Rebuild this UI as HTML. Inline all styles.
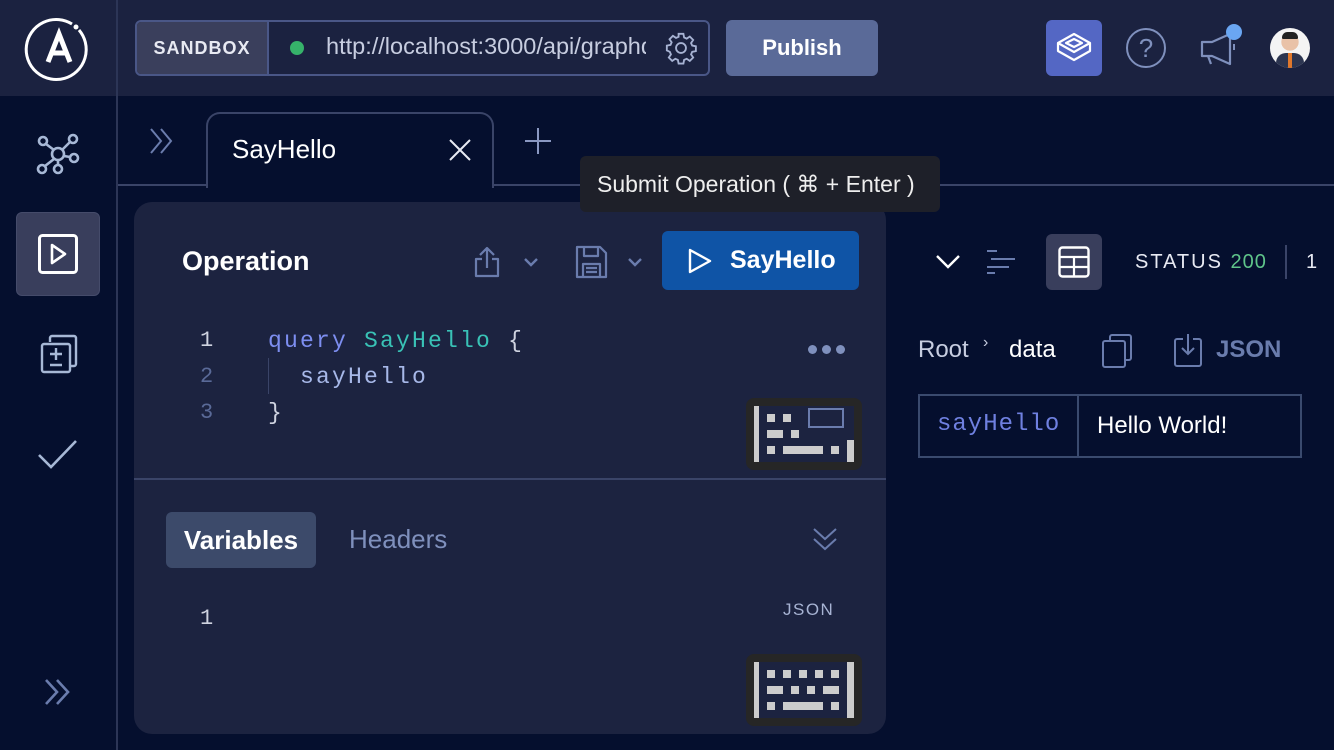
<!DOCTYPE html>
<html><head><meta charset="utf-8">
<style>
*{margin:0;padding:0;box-sizing:border-box}
body{width:1334px;height:750px;overflow:hidden;background:#050f2e;font-family:"Liberation Sans",sans-serif;color:#fff;position:relative}
.a{position:absolute}
.mono{font-family:"Liberation Mono","DejaVu Sans Mono",monospace}
svg{position:absolute;overflow:visible}
</style></head><body>
<div class="a" style="left:0;top:0;width:1334px;height:96px;background:#1b2240"></div>
<div class="a" style="left:116px;top:0;width:2px;height:750px;background:#2c3556"></div>
<svg style="left:26px;top:16px" width="66" height="66" viewBox="0 0 66 66"><path d="M53 14 A30 30 0 1 1 46 8" fill="none" stroke="#fff" stroke-width="3"/><circle cx="50" cy="11" r="2.5" fill="#fff"/><path d="M22 46 L33 18 L44 46 M26 37 H40" fill="none" stroke="#fff" stroke-width="5"/></svg>
<div class="a" style="left:135px;top:20px;width:575px;height:56px;border:2px solid #4a5787;border-radius:6px;background:#1b2240"></div>
<div class="a" style="left:137px;top:22px;width:132px;height:52px;background:#3a3f5c;border-right:2px solid #4a5787;border-radius:4px 0 0 4px;font-size:18px;font-weight:bold;letter-spacing:1px;line-height:52px;text-align:center;color:#e8eaf3">SANDBOX</div>
<div class="a" style="left:290px;top:41px;width:14px;height:14px;border-radius:50%;background:#36b26a"></div>
<div class="a" style="left:326px;top:33px;width:320px;overflow:hidden;white-space:nowrap;font-size:23.5px;color:#c7cde0">http://localhost:3000/api/graphql</div>
<svg style="left:664px;top:31px" width="34" height="34" viewBox="0 0 24 24"><path d="M12 8.5a3.5 3.5 0 1 0 0 7 3.5 3.5 0 0 0 0-7z M10.3 2h3.4l.5 2.6 1.8.8 2.2-1.5 2.4 2.4-1.5 2.2.8 1.8 2.6.5v3.4l-2.6.5-.8 1.8 1.5 2.2-2.4 2.4-2.2-1.5-1.8.8-.5 2.6h-3.4l-.5-2.6-1.8-.8-2.2 1.5-2.4-2.4 1.5-2.2-.8-1.8L2 13.7v-3.4l2.6-.5.8-1.8-1.5-2.2 2.4-2.4 2.2 1.5 1.8-.8z" fill="none" stroke="#a7b3d3" stroke-width="1.3"/></svg>
<div class="a" style="left:726px;top:20px;width:152px;height:56px;background:#5a6a98;border-radius:6px;font-size:22px;font-weight:bold;line-height:56px;text-align:center">Publish</div>
<div class="a" style="left:1046px;top:20px;width:56px;height:56px;background:#5467c4;border-radius:6px"></div>
<svg style="left:1054px;top:30px" width="40" height="36" viewBox="0 0 40 36"><path d="M20 4 L36 13 L20 22 L4 13 Z M4 13 V21 L20 30 L36 21 V13 M12 13 L20 9 L28 13 L20 17 Z" fill="none" stroke="#fff" stroke-width="2.2" stroke-linejoin="round"/></svg>
<div class="a" style="left:1126px;top:28px;width:40px;height:40px;border:2px solid #7f90bd;border-radius:50%;color:#7f90bd;font-size:26px;text-align:center;line-height:36px">?</div>
<svg style="left:1196px;top:24px" width="50" height="44" viewBox="0 0 50 44"><path d="M6 18 H16 L34 10 V40 L16 32 H6 Z M12 32 L15 40" fill="none" stroke="#7f90bd" stroke-width="2.2" stroke-linejoin="round"/><path d="M38 20 V26" stroke="#7f90bd" stroke-width="2"/><circle cx="38" cy="8" r="8" fill="#6aa6f2"/></svg>
<div class="a" style="left:1270px;top:28px;width:40px;height:40px;border-radius:50%;background:radial-gradient(circle at 50% 35%,#e9c2a8 0 26%,#f4f4f4 27%);overflow:hidden"><div class="a" style="left:6px;top:25px;width:28px;height:20px;background:#2c3550;border-radius:10px 10px 0 0"></div><div class="a" style="left:18px;top:25px;width:4px;height:16px;background:#e0782c"></div><div class="a" style="left:12px;top:4px;width:16px;height:7px;background:#222;border-radius:8px 8px 2px 2px"></div></div>
<svg style="left:36px;top:132px" width="44" height="44" viewBox="0 0 44 44"><g fill="none" stroke="#a7b8d6" stroke-width="2.6"><circle cx="22" cy="22" r="6"/><circle cx="7" cy="9" r="4"/><circle cx="37" cy="7" r="4"/><circle cx="38" cy="26" r="4"/><circle cx="6" cy="37" r="4"/><circle cx="22" cy="37" r="4"/><path d="M10 12 L18 18 M34 10 L26 18 M28 24 L34 25 M18 27 L9 34 M22 28 V33"/></g></svg>
<div class="a" style="left:16px;top:212px;width:84px;height:84px;background:#393e5c;border-radius:6px;border:1px solid #454b6a"></div>
<svg style="left:38px;top:234px" width="40" height="40" viewBox="0 0 40 40"><rect x="1.5" y="1.5" width="37" height="37" rx="3" fill="none" stroke="#fff" stroke-width="3"/><path d="M14 11 L27 20 L14 29 Z" fill="none" stroke="#fff" stroke-width="2.6" stroke-linejoin="round"/></svg>
<svg style="left:40px;top:334px" width="38" height="40" viewBox="0 0 38 40"><g fill="none" stroke="#a7b8d6" stroke-width="2.4"><path d="M10 8 V4 A2 2 0 0 1 12 2 H34 A2 2 0 0 1 36 4 V30 A2 2 0 0 1 34 32 H30"/><rect x="2" y="10" width="28" height="28" rx="2"/><path d="M10 20 H22 M16 14 V26 M10 31 H22"/></g></svg>
<svg style="left:38px;top:440px" width="40" height="30" viewBox="0 0 40 30"><path d="M1 15 L13 27 L38 1" fill="none" stroke="#a7b8d6" stroke-width="2.6"/></svg>
<svg style="left:45px;top:678px" width="26" height="28" viewBox="0 0 26 28"><path d="M1 2 L12 14 L1 26 M12 2 L23 14 L12 26" fill="none" stroke="#6a7cad" stroke-width="2.6"/></svg>
<div class="a" style="left:118px;top:184px;width:1216px;height:2px;background:#3a4468"></div>
<svg style="left:150px;top:128px" width="24" height="26" viewBox="0 0 24 26"><path d="M1 1 L11 13 L1 25 M11 1 L21 13 L11 25" fill="none" stroke="#6a7cad" stroke-width="2"/></svg>
<div class="a" style="left:206px;top:112px;width:288px;height:76px;background:#050f2e;border:2px solid #3a4468;border-bottom:none;border-radius:14px 14px 0 0"></div>
<div class="a" style="left:232px;top:134px;font-size:26px;color:#fff">SayHello</div>
<svg style="left:449px;top:139px" width="22" height="22" viewBox="0 0 22 22"><path d="M1 1 L21 21 M21 1 L1 21" stroke="#e8eaf3" stroke-width="2"/></svg>
<svg style="left:525px;top:128px" width="26" height="26" viewBox="0 0 26 26"><path d="M13 0 V26 M0 13 H26" stroke="#8a98c2" stroke-width="2"/></svg>
<div class="a" style="left:134px;top:202px;width:752px;height:532px;background:#1c2340;border-radius:18px"></div>
<div class="a" style="left:134px;top:478px;width:752px;height:2px;background:#3a4468"></div>
<div class="a" style="left:182px;top:246px;font-size:27px;font-weight:bold">Operation</div>
<svg style="left:474px;top:246px" width="26" height="32" viewBox="0 0 26 32"><path d="M13 2 V22 M6 9 L13 2 L20 9 M8 13 H2 V30 H24 V13 H18" fill="none" stroke="#6a7cad" stroke-width="2.2" stroke-linejoin="round"/></svg>
<svg style="left:523px;top:257px" width="16" height="10" viewBox="0 0 16 10"><path d="M2 2 L8 8 L14 2" fill="none" stroke="#6a7cad" stroke-width="2.4"/></svg>
<svg style="left:574px;top:246px" width="34" height="32" viewBox="0 0 34 32"><path d="M3 1 H26 L32 7 V31 H3 Z M10 1 V10 H24 V1 M9 31 V18 H26 V31 M12 22 H23 M12 26 H23" fill="none" stroke="#6a7cad" stroke-width="2.2" stroke-linejoin="round"/></svg>
<svg style="left:627px;top:257px" width="16" height="10" viewBox="0 0 16 10"><path d="M2 2 L8 8 L14 2" fill="none" stroke="#6a7cad" stroke-width="2.4"/></svg>
<div class="a" style="left:662px;top:231px;width:197px;height:59px;background:#0f54a6;border-radius:6px"></div>
<svg style="left:688px;top:248px" width="24" height="26" viewBox="0 0 24 26"><path d="M2 2 L22 13 L2 24 Z" fill="none" stroke="#fff" stroke-width="2.4" stroke-linejoin="round"/></svg>
<div class="a" style="left:730px;top:246px;font-size:25px;font-weight:bold">SayHello</div>
<div class="a mono" style="left:200px;top:323px;font-size:22px;line-height:36px;color:#cfd3e0">1<br><span style="color:#5a6a98">2</span><br><span style="color:#5a6a98">3</span></div>
<div class="a" style="left:268px;top:358px;width:1px;height:36px;background:#3a4468"></div>
<div class="a mono" style="left:268px;top:323px;font-size:23px;letter-spacing:2.2px;line-height:36px;white-space:pre;color:#cfd3e0"><span style="color:#7d8ef0">query</span> <span style="color:#39c2b6">SayHello</span> {
  <span style="color:#a7b8e8">sayHello</span>
}</div>
<div class="a" style="left:808px;top:345px;width:9px;height:9px;border-radius:50%;background:#7f90bd"></div>
<div class="a" style="left:822px;top:345px;width:9px;height:9px;border-radius:50%;background:#7f90bd"></div>
<div class="a" style="left:836px;top:345px;width:9px;height:9px;border-radius:50%;background:#7f90bd"></div>
<div class="a" style="left:746px;top:398px;width:116px;height:72px;background:#262626;border-radius:8px"></div>
<div class="a" style="left:754px;top:406px;width:100px;height:56px;background:#1c2340"></div>
<div class="a" style="left:754px;top:406px;width:5px;height:56px;background:#ccc"></div>
<div class="a" style="left:847px;top:440px;width:7px;height:22px;background:#ccc"></div>
<div class="a" style="left:767px;top:414px;width:8px;height:8px;background:#ccc"></div><div class="a" style="left:783px;top:414px;width:8px;height:8px;background:#ccc"></div>
<div class="a" style="left:767px;top:430px;width:16px;height:8px;background:#ccc"></div><div class="a" style="left:791px;top:430px;width:8px;height:8px;background:#ccc"></div>
<div class="a" style="left:767px;top:446px;width:8px;height:8px;background:#ccc"></div><div class="a" style="left:783px;top:446px;width:40px;height:8px;background:#ccc"></div><div class="a" style="left:831px;top:446px;width:8px;height:8px;background:#ccc"></div>
<div class="a" style="left:808px;top:408px;width:36px;height:20px;border:2px solid #6a7cad"></div>
<div class="a" style="left:166px;top:512px;width:150px;height:56px;background:#3c4a6a;border-radius:6px;font-size:26px;font-weight:bold;text-align:center;line-height:56px">Variables</div>
<div class="a" style="left:349px;top:524px;font-size:26px;color:#7f90bd">Headers</div>
<svg style="left:813px;top:528px" width="24" height="24" viewBox="0 0 24 24"><path d="M1 1 L12 11 L23 1 M1 11 L12 21 L23 11" fill="none" stroke="#6a7cad" stroke-width="2"/></svg>
<div class="a" style="left:783px;top:600px;font-size:17px;letter-spacing:1.5px;color:#a7b3d3">JSON</div>
<div class="a mono" style="left:200px;top:606px;font-size:22px;color:#cfd3e0">1</div>
<div class="a" style="left:746px;top:654px;width:116px;height:72px;background:#262626;border-radius:8px"></div>
<div class="a" style="left:754px;top:662px;width:100px;height:56px;background:#1c2340"></div>
<div class="a" style="left:754px;top:662px;width:5px;height:56px;background:#ccc"></div>
<div class="a" style="left:847px;top:662px;width:7px;height:56px;background:#ccc"></div>
<div class="a" style="left:767px;top:670px;width:8px;height:8px;background:#ccc"></div><div class="a" style="left:783px;top:670px;width:8px;height:8px;background:#ccc"></div><div class="a" style="left:799px;top:670px;width:8px;height:8px;background:#ccc"></div><div class="a" style="left:815px;top:670px;width:8px;height:8px;background:#ccc"></div><div class="a" style="left:831px;top:670px;width:8px;height:8px;background:#ccc"></div>
<div class="a" style="left:767px;top:686px;width:16px;height:8px;background:#ccc"></div><div class="a" style="left:791px;top:686px;width:8px;height:8px;background:#ccc"></div><div class="a" style="left:807px;top:686px;width:8px;height:8px;background:#ccc"></div><div class="a" style="left:823px;top:686px;width:16px;height:8px;background:#ccc"></div>
<div class="a" style="left:767px;top:702px;width:8px;height:8px;background:#ccc"></div><div class="a" style="left:783px;top:702px;width:40px;height:8px;background:#ccc"></div><div class="a" style="left:831px;top:702px;width:8px;height:8px;background:#ccc"></div>
<div class="a" style="left:580px;top:156px;width:360px;height:56px;background:#1e2029;border-radius:6px;font-size:23px;line-height:56px;padding-left:17px;color:#eee">Submit Operation ( ⌘ + Enter )</div>
<svg style="left:935px;top:254px" width="26" height="16" viewBox="0 0 26 16"><path d="M2 2 L13 13 L24 2" fill="none" stroke="#fff" stroke-width="2.4"/></svg>
<svg style="left:985px;top:249px" width="32" height="26" viewBox="0 0 32 26"><path d="M2 2 H12 M6 10 H30 M2 18 H24 M2 24 H10" stroke="#6a7cad" stroke-width="2"/></svg>
<div class="a" style="left:1046px;top:234px;width:56px;height:56px;background:#393e5c;border-radius:6px"></div>
<svg style="left:1058px;top:246px" width="32" height="32" viewBox="0 0 32 32"><rect x="1.5" y="1.5" width="29" height="29" rx="3" fill="none" stroke="#fff" stroke-width="2.4"/><path d="M2 11 H30 M2 21 H30 M16 11 V30" stroke="#fff" stroke-width="2.2"/></svg>
<div class="a" style="left:1135px;top:251px;font-size:20px;letter-spacing:2px;color:#e8eaf3">STATUS <span style="color:#5fc48a;letter-spacing:1px">200</span></div>
<div class="a" style="left:1285px;top:245px;width:2px;height:34px;background:#3a4468"></div>
<div class="a" style="left:1306px;top:251px;font-size:20px;color:#e8eaf3">1</div>
<div class="a" style="left:918px;top:336px;font-size:24px;color:#c7cde0">Root</div>
<div class="a" style="left:983px;top:334px;font-size:16px;color:#c7cde0">›</div>
<div class="a" style="left:1009px;top:336px;font-size:24px;color:#fff">data</div>
<svg style="left:1101px;top:334px" width="32" height="34" viewBox="0 0 32 34"><path d="M9 6 V3 A2 2 0 0 1 11 1 H28 A2 2 0 0 1 30 3 V24 A2 2 0 0 1 28 26 H25" fill="none" stroke="#6a7cad" stroke-width="2"/><rect x="2" y="7" width="22" height="26" rx="2" fill="none" stroke="#6a7cad" stroke-width="2"/></svg>
<svg style="left:1174px;top:333px" width="28" height="34" viewBox="0 0 28 34"><path d="M9 6 H3 A2 2 0 0 0 1 8 V31 A2 2 0 0 0 3 33 H25 A2 2 0 0 0 27 31 V8 A2 2 0 0 0 25 6 H19 M14 1 V21 M8 15 L14 21 L20 15" fill="none" stroke="#6a7cad" stroke-width="2"/></svg>
<div class="a" style="left:1216px;top:336px;font-size:24px;font-weight:bold;color:#6a7cad">JSON</div>
<div class="a" style="left:918px;top:394px;width:384px;height:64px;border:2px solid #3a4a6e"></div>
<div class="a" style="left:1077px;top:394px;width:2px;height:64px;background:#3a4a6e"></div>
<div class="a mono" style="left:937px;top:411px;font-size:24px;letter-spacing:1px;color:#6f80e0">sayHello</div>
<div class="a" style="left:1097px;top:412px;font-size:24px;color:#fff">Hello World!</div>
</body></html>
